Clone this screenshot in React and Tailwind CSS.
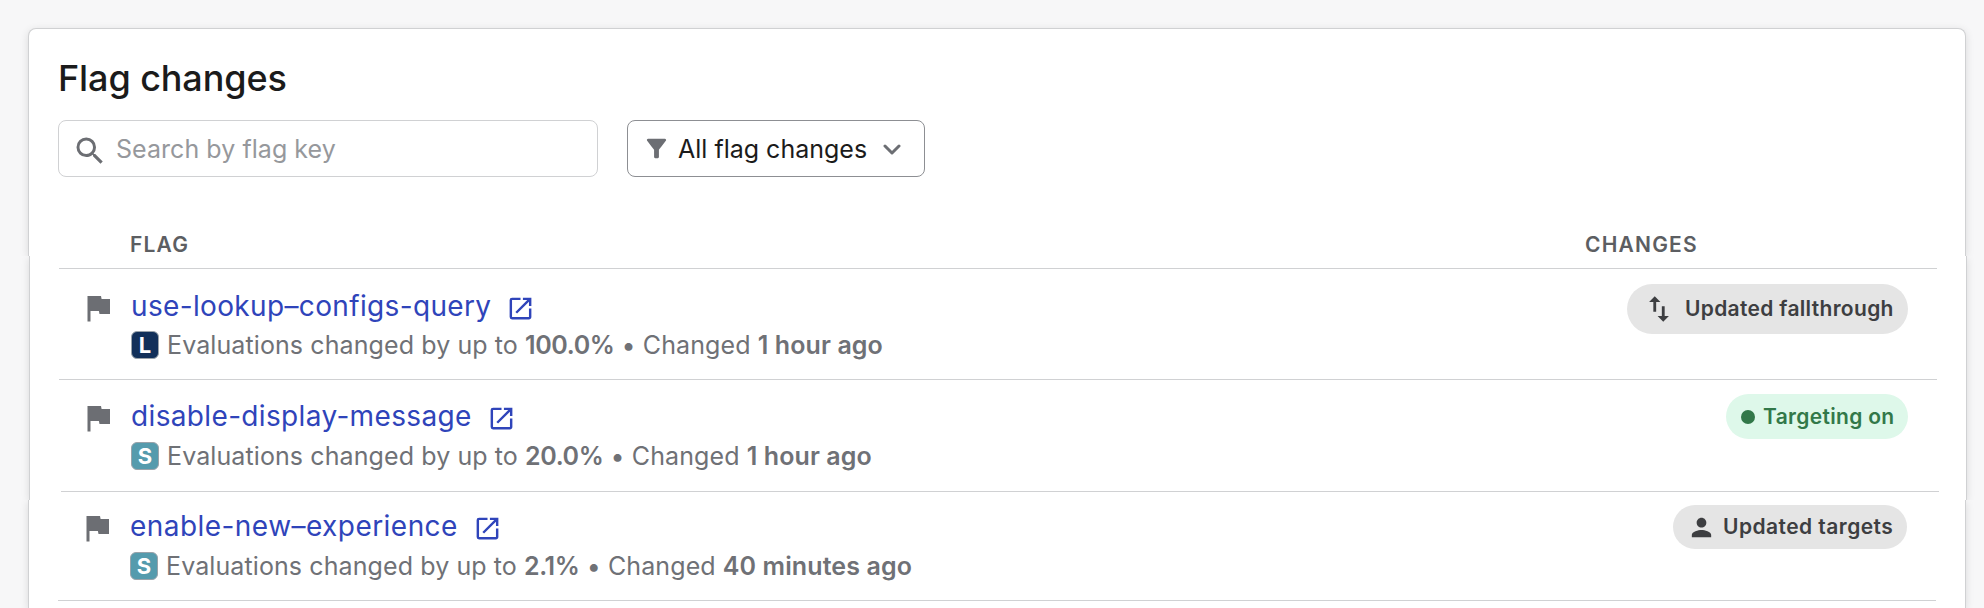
import React from "react";
import { MdSearch, MdFilterAlt, MdFlag, MdOpenInNew, MdPerson, MdSwapVert } from "react-icons/md";

function Header() {
  return (
    <header className="ml-7 flex h-[228px] w-[1938px] flex-col rounded-t-lg border border-b-0 border-[#d0d1d3] bg-white pl-[29px] shadow-[0_2px_8px_rgba(0,0,0,0.12)] [clip-path:inset(-12px_-12px_0_-12px)]">
      <h1 className="mt-[27px] h-11 text-[36px] leading-11 font-medium tracking-[-0.1px] whitespace-nowrap text-[#1b1b1b]">Flag changes</h1>
      <div className="mt-5 flex gap-[29px]">
        <div className="flex h-[57px] w-[540px] items-center rounded-lg border border-[#d0d1d3] pl-[13px]">
          <MdSearch className="mt-1 size-9 text-[#6c6e73]" />
          <span className="ml-2 text-[25px] leading-8 tracking-[0.05px] whitespace-nowrap text-[#96989c]">Search by flag key</span>
        </div>
        <button className="flex h-[57px] w-[298px] items-center rounded-lg border border-[#8d8f93] pl-3.5">
          <MdFilterAlt className="size-[29px] text-[#6c6e73]" />
          <span className="ml-[7px] text-[25px] leading-8 whitespace-nowrap text-[#1b1b1b]">All flag changes</span>
          <svg viewBox="0 0 18 12" className="mt-0.5 ml-4 h-3 w-[18px]" fill="none" stroke="#6c6e73" strokeWidth="3" strokeLinecap="round" strokeLinejoin="round">
            <path d="M2 2l7 7 7-7" />
          </svg>
        </button>
      </div>
      <div className="mt-[54px] flex h-7 text-[21px] leading-7 font-semibold tracking-[1.2px] text-[#5c5e62]">
        <span className="ml-[72px] w-[1455px]">FLAG</span>
        <span>CHANGES</span>
      </div>
    </header>
  );
}

function FlagRow({ name, tracking, letter, avatar, gap, percent, when, children }) {
  return (
    <div className="flex w-full pl-[21px]">
      <MdFlag className="size-9 shrink-0 text-[#6c6e73]" />
      <div className="ml-[15px] grow">
        <div className="flex h-9 items-center">
          <a className={`-mt-1 text-[28px] leading-9 whitespace-nowrap text-[#2f44ba] ${tracking}`}>{name}</a>
          <MdOpenInNew className="ml-[15px] size-[29px] text-[#2f44ba]" />
        </div>
        <div className={`flex h-9 items-center text-[25px] leading-9 tracking-[0.1px] whitespace-nowrap text-[#6f7176] ${gap}`}>
          <span className={`mr-2 flex size-7 items-center justify-center rounded-md border border-[#9aa3aa] text-[22px] leading-7 font-bold text-white ${avatar}`}>{letter}</span>
          <span>
            Evaluations changed by up to <b className="font-semibold tracking-[-0.4px]">{percent}</b> • Changed <b className="font-semibold">{when}</b>
          </span>
        </div>
      </div>
      {children}
    </div>
  );
}

export default function App() {
  return (
    <main className="h-[608px] w-[1984px] overflow-hidden bg-[#f7f7f8] pt-7 font-['Inter',sans-serif]">
      <Header />
      <section className="ml-[29px] h-[244px] w-[1938px] border-x border-[#d0d1d3] bg-white pt-3 pl-[29px] shadow-[0_2px_8px_rgba(0,0,0,0.12)] [clip-path:inset(0_-12px_0_-12px)]">
        <div className="flex h-[111px] w-[1878px] border-t border-[#d0d1d3] pt-[21px]">
          <FlagRow name="use-lookup–configs-query" tracking="tracking-[0.35px]" letter="L" avatar="bg-[#12305a]" gap="mt-px" percent="100.0%" when="1 hour ago">
            <span className="-mt-1.5 mr-[29px] flex h-[50px] w-[281px] items-center rounded-full bg-[#e5e5e5] pl-[15px] text-[21px] leading-7 font-semibold tracking-[0.32px] whitespace-nowrap text-[#3d3e41]">
              <MdSwapVert className="mr-[9px] size-[34px]" />Updated fallthrough
            </span>
          </FlagRow>
        </div>
        <div className="flex h-[112px] w-[1878px] border-t border-[#d0d1d3] pt-[20px]">
          <FlagRow name="disable-display-message" tracking="tracking-[0.35px]" letter="S" avatar="bg-[#559bad]" gap="mt-0.5" percent="20.0%" when="1 hour ago">
            <span className="-mt-1.5 mr-[29px] flex h-[45px] w-[182px] items-center rounded-full bg-[#def8ea] pl-[15px] text-[21px] leading-7 font-semibold tracking-[0.32px] whitespace-nowrap text-[#327849]">
              <i className="mr-[8px] size-[14px] rounded-full bg-[#327849]" />Targeting on
            </span>
          </FlagRow>
        </div>
        <div className="ml-0.5 h-px w-[1878px] bg-[#d0d1d3]" />
      </section>
      <section className="ml-7 h-[108px] w-[1938px] border-x border-[#d0d1d3] bg-white pl-[29px] shadow-[0_2px_8px_rgba(0,0,0,0.12)] [clip-path:inset(0_-12px_0_-12px)]">
        <div className="flex h-[101px] w-[1878px] border-b border-[#d0d1d3] pt-2.5">
          <FlagRow name="enable-new–experience" tracking="tracking-[0.45px]" letter="S" avatar="bg-[#559bad]" gap="mt-0.5" percent="2.1%" when="40 minutes ago">
            <span className="-mt-[5px] mr-[29px] flex h-11 w-[234px] items-center rounded-full bg-[#e5e5e5] pl-[14px] text-[21px] leading-7 font-semibold tracking-[0.45px] whitespace-nowrap text-[#3d3e41]">
              <MdPerson className="mr-[7px] size-[29px]" />Updated targets
            </span>
          </FlagRow>
        </div>
      </section>
    </main>
  );
}
